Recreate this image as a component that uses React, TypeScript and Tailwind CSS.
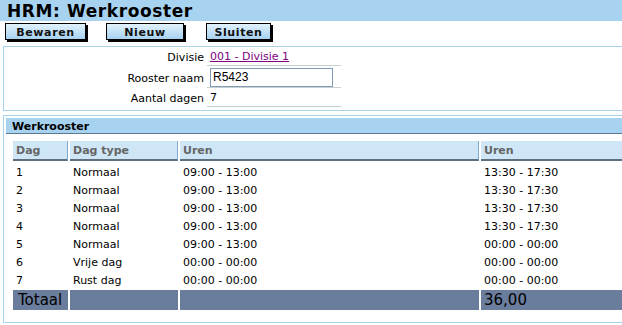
const rows = [
  { dag: "1", type: "Normaal", a: "09:00 - 13:00", b: "13:30 - 17:30" },
  { dag: "2", type: "Normaal", a: "09:00 - 13:00", b: "13:30 - 17:30" },
  { dag: "3", type: "Normaal", a: "09:00 - 13:00", b: "13:30 - 17:30" },
  { dag: "4", type: "Normaal", a: "09:00 - 13:00", b: "13:30 - 17:30" },
  { dag: "5", type: "Normaal", a: "09:00 - 13:00", b: "00:00 - 00:00" },
  { dag: "6", type: "Vrije dag", a: "00:00 - 00:00", b: "00:00 - 00:00" },
  { dag: "7", type: "Rust dag", a: "00:00 - 00:00", b: "00:00 - 00:00" },
];

function Button({ label, width }: { label: string; width: string }) {
  return (
    <button
      className={`${width} h-[17px] border border-black bg-gradient-to-b from-[#e2f2fc] to-[#a6d1f0] text-[11px] font-bold tracking-[0.6px] text-[#111] leading-none pt-[1px] shadow-[2px_2px_0_#000]`}
    >
      {label}
    </button>
  );
}

export default function App() {
  const cols = "grid grid-cols-[55px_108px_299px_160px] gap-x-[2px]";
  return (
    <div className="w-[622px] h-[325px] overflow-hidden bg-white text-[11px] leading-[13px] text-black" style={{ fontFamily: '"DejaVu Sans", Verdana, sans-serif' }}>
      {/* Title */}
      <div className="h-[21px] bg-[#a7d3f0] pl-[7px] flex items-center">
        <h1 className="text-[17px] font-bold leading-none tracking-[0.6px] pt-[1px]">HRM: Werkrooster</h1>
      </div>

      {/* Toolbar */}
      <div className="flex items-start pt-[2px] h-[25px]">
        <div className="ml-[5px]"><Button label="Bewaren" width="w-[81px]" /></div>
        <div className="ml-[20px]"><Button label="Nieuw" width="w-[78px]" /></div>
        <div className="ml-[22px]"><Button label="Sluiten" width="w-[65px]" /></div>
      </div>

      {/* Form */}
      <div className="ml-[3px] w-[640px] h-[65px] border border-[#a7d3f0] pt-[2px]">
        <div className="grid grid-cols-[203px_134px]">
          <div className="h-[17px] flex items-end pb-[2px] justify-end pr-[3px]">Divisie</div>
          <div className="h-[17px] flex items-end pb-[2px] pl-[3px] border-b border-[#c9d0d0]">
            <a href="#" className="text-[#800080] underline">001 - Divisie 1</a>
          </div>
          <div className="h-[22px] flex items-center pt-[2px] justify-end pr-[3px]">Rooster naam</div>
          <div className="h-[22px] flex items-center pl-[3px] pt-[1px] border-b border-[#c9d0d0]">
            <input
              defaultValue="R5423"
              className="w-[123px] h-[19px] border border-[#7f9db9] px-[2px] text-[12px] outline-none"
              style={{ fontFamily: '"Liberation Sans", Arial, sans-serif' }}
            />
          </div>
          <div className="h-[19px] flex items-end pb-[2px] justify-end pr-[3px]">Aantal dagen</div>
          <div className="h-[19px] flex items-end pb-[2px] pl-[3px] border-b border-[#c9d0d0]">7</div>
        </div>
      </div>

      {/* Werkrooster */}
      <div className="ml-[3px] mt-[4px] w-[640px] h-[208px] border border-[#a7d3f0] pt-[2px] pl-[2px]">
        <div className="h-[16px] bg-[#a7d3f0] border-b border-[#5d7891] pl-[6px] pt-[2px] flex items-center font-bold">
          Werkrooster
        </div>

        <div className="ml-[7px] mt-[7px]">
          <div className={`${cols} font-bold text-[#666]`}>
            {["Dag", "Dag type", "Uren", "Uren"].map((h, i) => (
              <div
                key={i}
                className="h-[20px] bg-[#cfe6f6] border-b-2 border-r border-b-[#5f6f80] border-r-[#7ea9d1] pl-[3px] pt-[1px] flex items-center"
              >
                {h}
              </div>
            ))}
          </div>

          <div className="mt-[1px]">
            {rows.map((r) => (
              <div key={r.dag} className={`${cols} h-[18px] items-center pt-[2px]`}>
                <div className="pl-[3px]">{r.dag}</div>
                <div className="pl-[3px]">{r.type}</div>
                <div className="pl-[3px]">{r.a}</div>
                <div className="pl-[3px]">{r.b}</div>
              </div>
            ))}
          </div>

          <div className={`${cols} mt-[2px] h-[20px] text-[15px] leading-[18px]`}>
            <div className="bg-[#6b7d9c] pl-[5px] flex items-center">Totaal</div>
            <div className="bg-[#6b7d9c]" />
            <div className="bg-[#6b7d9c]" />
            <div className="bg-[#6b7d9c] pl-[3px] flex items-center">36,00</div>
          </div>
        </div>
      </div>
    </div>
  );
}
